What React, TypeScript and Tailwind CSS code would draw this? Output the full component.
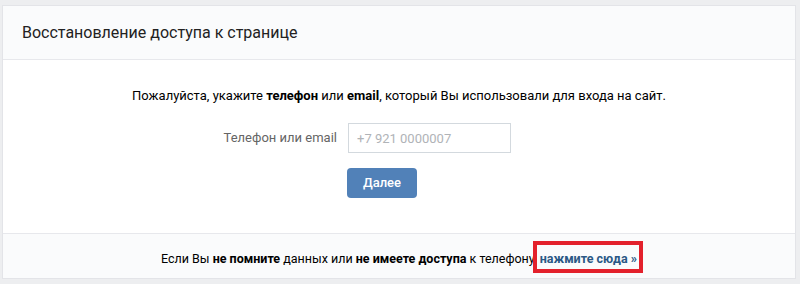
export default function App() {
  return (
    <div
      className="h-[284px] w-[800px] bg-[#edeef0] pt-[5px] pl-[2px] text-[13px] text-black"
      style={{ fontFamily: "Roboto, 'Open Sans', Arial, sans-serif" }}
    >
      <div className="w-[794px] border border-[#e3e4e8] bg-white">
        {/* Header */}
        <div className="flex h-[54px] items-center border-b border-[#e7e8ec] bg-[#fafbfc] px-[19px] text-[16px] text-[#222]">
          Восстановление доступа к странице
        </div>

        {/* Body */}
        <div className="flex h-[173px] flex-col pt-[27px]">
          <p className="text-center leading-[18px]">
            Пожалуйста, укажите <b>телефон</b> или <b>email</b>, который Вы использовали для входа на сайт.
          </p>
          <div className="mt-[18px] flex items-center">
            <label className="w-[334px] text-right text-[#656565]">Телефон или email</label>
            <input
              className="ml-[11px] h-[30px] w-[163px] border border-[#d3d9de] px-[8px] text-[13px] text-black outline-none placeholder:text-[#b0b3b7]"
              placeholder="+7 921 0000007"
            />
          </div>
          <div className="mt-[15px] pl-[344px]">
            <button className="h-[30px] w-[70px] rounded-[4px] bg-[#5181b8] text-[13px] font-medium text-white">
              Далее
            </button>
          </div>
        </div>

        {/* Footer */}
        <div className="flex h-[45px] items-center justify-center border-t border-[#e7e8ec] bg-[#fafbfc] pt-[4px] text-center text-[12.5px] leading-[15px]">
          <span>
            Если Вы <b>не помните</b> данных или <b>не имеете доступа</b> к телефону,{" "}
            <a className="relative font-bold text-[#2a5885]">
              нажмите сюда »
              <span className="pointer-events-none absolute -top-[10px] -bottom-[7px] -left-[7px] -right-[6px] border-4 border-[#e3212c]" />
            </a>
          </span>
        </div>
      </div>
    </div>
  );
}
